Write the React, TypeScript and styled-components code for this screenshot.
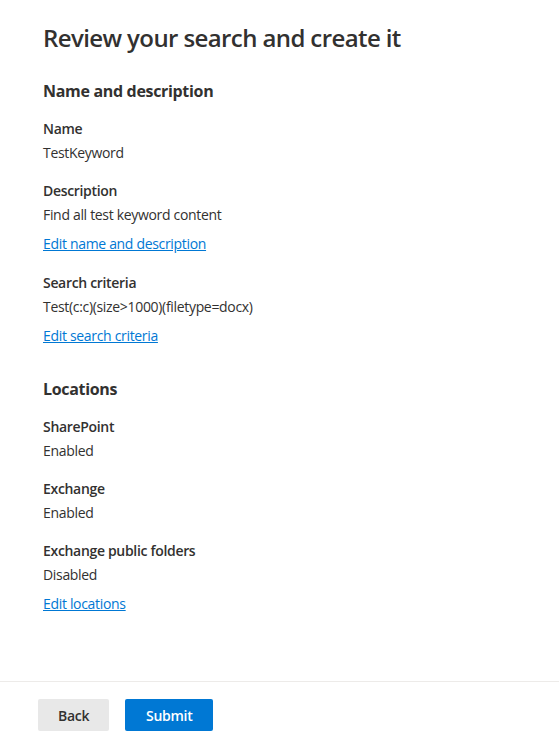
import styled, { createGlobalStyle } from "styled-components";

const GlobalStyle = createGlobalStyle`
  html, body {
    margin: 0;
    padding: 0;
    background: #ffffff;
  }
  body {
    font-family: "Segoe UI", "Open Sans", "Noto Sans", sans-serif;
    color: #323130;
    letter-spacing: -0.02em;
  }
`;

type FieldProps = { label: string; value: string };

const Field = ({ label, value }: FieldProps) => (
  <FieldBlock>
    <Label>{label}</Label>
    <Value>{value}</Value>
  </FieldBlock>
);

const App = () => {
  return (
    <Page>
      <GlobalStyle />
      <Content>
        <Title>Review your search and create it</Title>
        <Section>
          <SectionTitle>Name and description</SectionTitle>
          <Field label="Name" value="TestKeyword" />
          <Field label="Description" value="Find all test keyword content" />
          <EditLink href="#">Edit name and description</EditLink>
          <Field label="Search criteria" value="Test(c:c)(size>1000)(filetype=docx)" />
          <EditLink href="#">Edit search criteria</EditLink>
        </Section>
        <Section>
          <SectionTitle>Locations</SectionTitle>
          <Field label="SharePoint" value="Enabled" />
          <Field label="Exchange" value="Enabled" />
          <Field label="Exchange public folders" value="Disabled" />
          <EditLink href="#">Edit locations</EditLink>
        </Section>
      </Content>
      <Footer>
        <Button>Back</Button>
        <Button primary>Submit</Button>
      </Footer>
    </Page>
  );
};

export default App;

const Page = styled.div`
  height: 100vh;
  display: flex;
  flex-direction: column;
`;

const Content = styled.div`
  flex: 1;
  padding: 22px 43px 0;
  display: flex;
  flex-direction: column;
`;

const Title = styled.h1`
  margin: 0 0 26px;
  font-size: 24px;
  line-height: 32px;
  font-weight: 600;
  letter-spacing: -0.025em;
`;

const Section = styled.section`
  display: flex;
  flex-direction: column;
  align-items: flex-start;
  margin-bottom: 13px;
`;

const SectionTitle = styled.h2`
  margin: 0 0 17px;
  font-size: 16px;
  line-height: 22px;
  font-weight: 700;
`;

const FieldBlock = styled.div`
  display: flex;
  flex-direction: column;
  margin-bottom: 18px;

  & + a {
    margin-top: -9px;
  }
`;

const Label = styled.div`
  font-size: 14px;
  line-height: 20px;
  font-weight: 600;
  margin-bottom: 4px;
`;

const Value = styled.div`
  font-size: 14px;
  line-height: 20px;
`;

const EditLink = styled.a`
  font-size: 14px;
  line-height: 20px;
  color: #0078d4;
  text-decoration: underline;
  margin-bottom: 19px;
`;

const Footer = styled.div`
  border-top: 1px solid #edebe9;
  padding: 17px 38px 12px;
  display: flex;
  gap: 16px;
`;

const Button = styled.button<{ primary?: boolean }>`
  height: 32px;
  min-width: ${(p) => (p.primary ? "88px" : "71px")};
  padding: 0 20px;
  border: none;
  border-radius: 2px;
  font-family: inherit;
  font-size: 14px;
  font-weight: 600;
  letter-spacing: -0.02em;
  background: ${(p) => (p.primary ? "#0078d4" : "#e8e8e8")};
  color: ${(p) => (p.primary ? "#ffffff" : "#323130")};
  cursor: pointer;
`;
